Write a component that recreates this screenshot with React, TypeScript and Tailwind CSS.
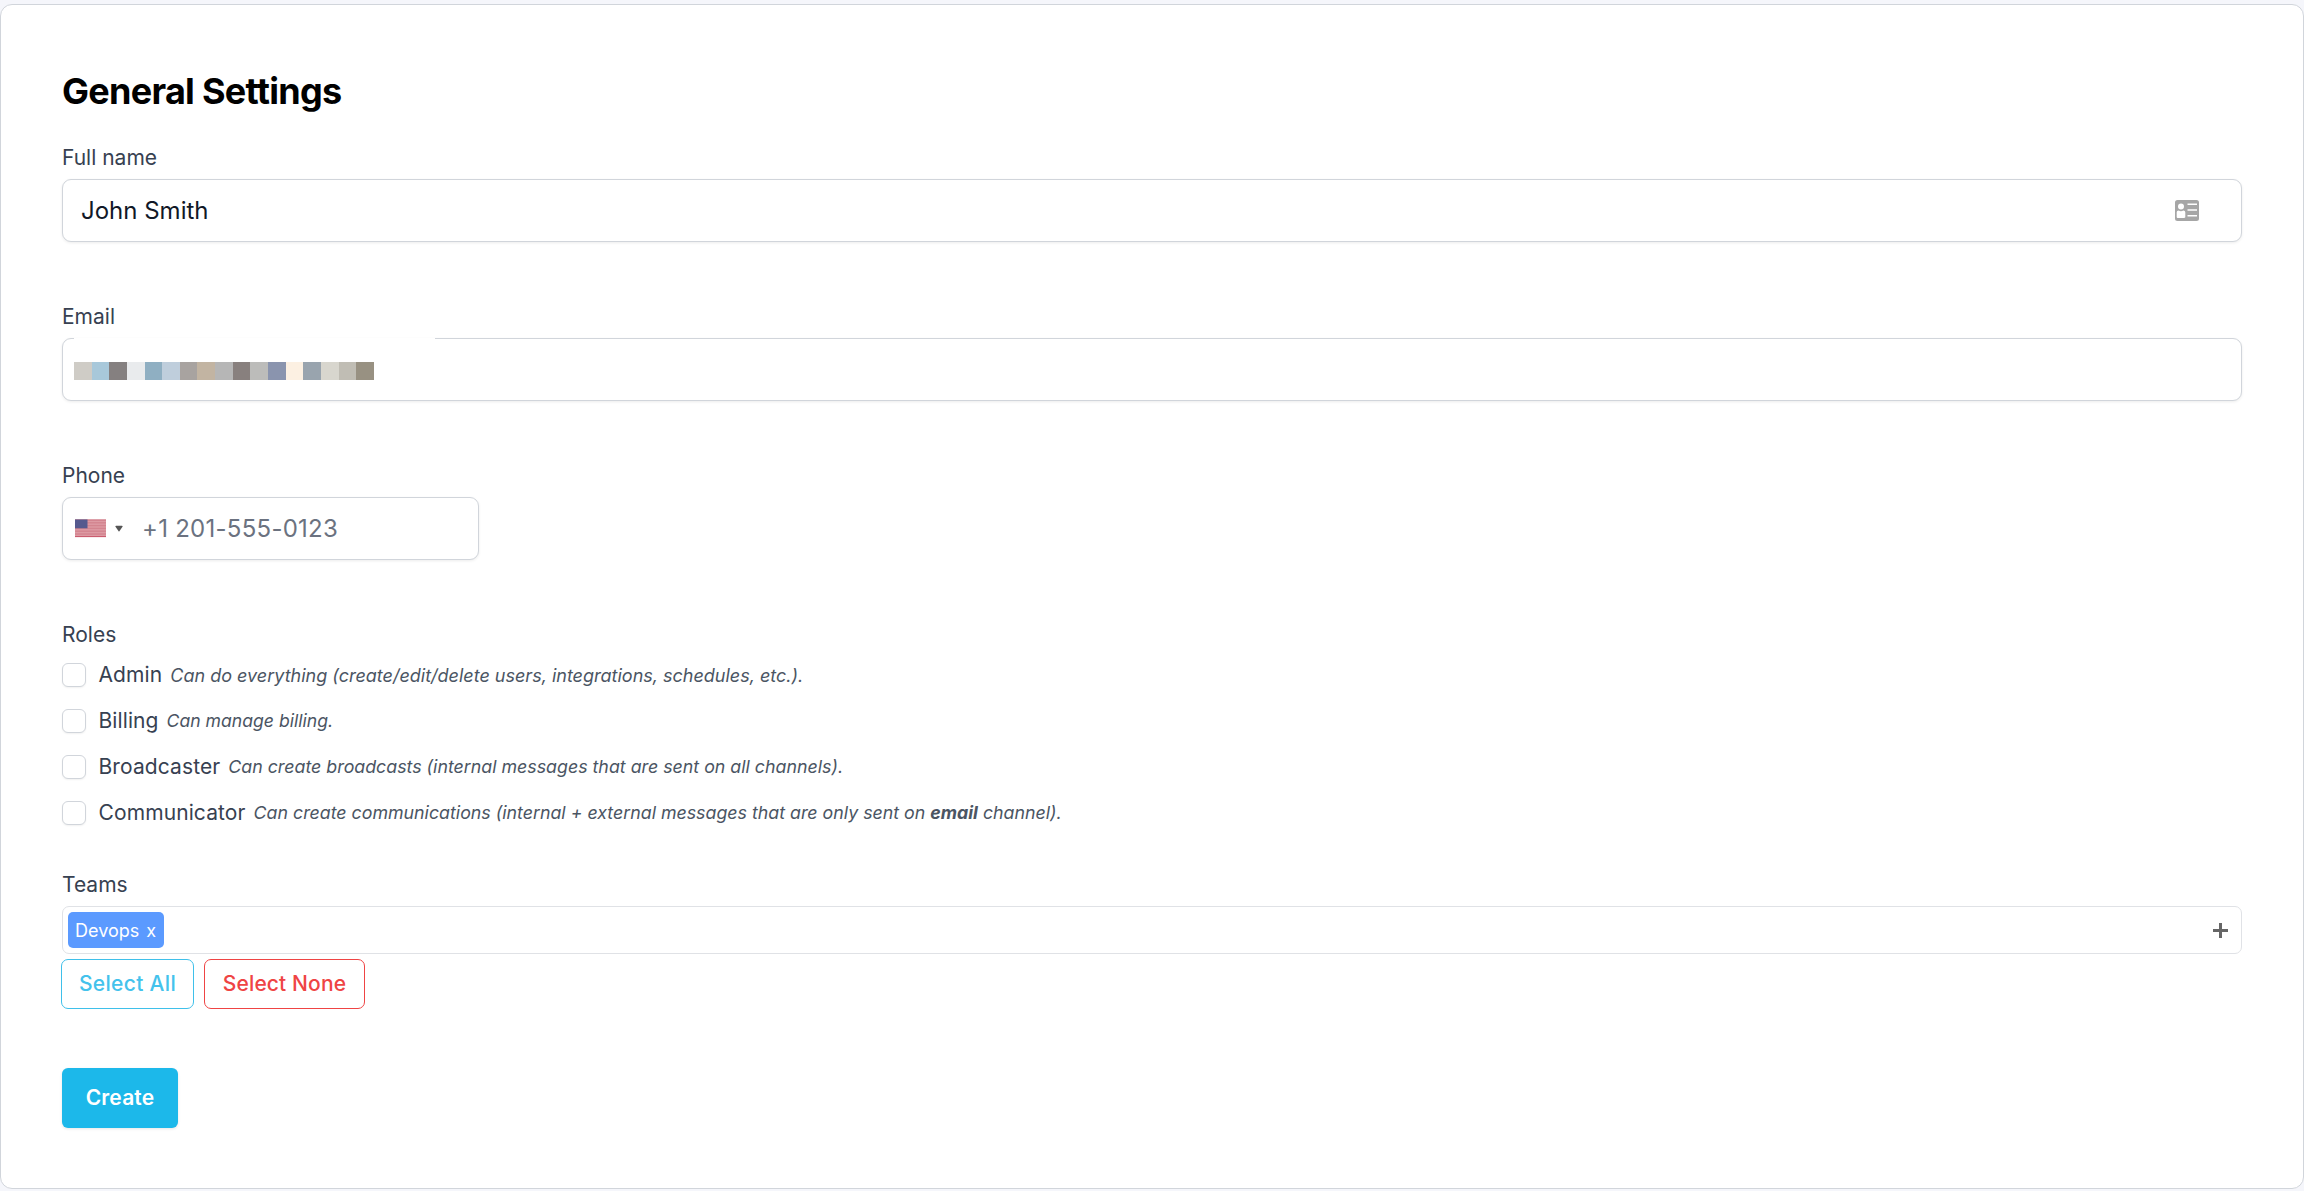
import React from "react";

const maskColors = ["#cfccc6","#a8c8da","#858080","#e9ebed","#8fafc2","#bfcedc","#a8a3a0","#c2b4a2","#b6b6b6","#88807e","#bcbcba","#8a94ae","#fcf0e2","#99a4ae","#d8d6ce","#c0bdb4","#989182"];

function Label({ children, className = "" }: { children: React.ReactNode; className?: string }) {
  return <label className={`block h-[32px] text-[21px] font-normal text-[#374151] ${className}`}>{children}</label>;
}

const inputBox = "flex h-[63px] items-center rounded-[9px] border border-[#d1d5db] bg-white shadow-[0_1px_3px_rgba(0,0,0,0.08)]";

function Role({ name, descClass, children }: { name: string; descClass: string; children: React.ReactNode }) {
  return (
    <div className="flex h-[24px] items-center">
      <span className="h-[24px] w-[24px] shrink-0 rounded-[6px] border border-[#d1d5db] bg-white shadow-[0_1px_2px_rgba(0,0,0,0.06)]" />
      <span className="ml-[12.5px] text-[21px] tracking-[0.005em] text-[#374151]">{name}</span>
      <span className={`ml-[8px] italic text-[#4b5563] ${descClass}`}>{children}</span>
    </div>
  );
}

export default function App() {
  return (
    <div className="min-h-[1191px] bg-[#f5f6fb] pt-[4px] pb-[2px] font-['Inter',sans-serif]">
      <div className="h-[1185px] rounded-[12px] border border-[#d1d5db] bg-white px-[61px] pt-[59px]">
        <h1 className="h-[54px] text-[36px] leading-[55px] font-bold tracking-[-0.02em] text-black">General Settings</h1>
        <Label className="mt-[23px] mb-[6px] leading-[34px]">Full name</Label>
        <div className={`${inputBox} w-full pl-[18px] pr-[42px]`}>
          <span className="flex-1 text-[24px] text-[#111827]">John Smith</span>
          <svg width="24" height="21" viewBox="0 0 24 21" className="shrink-0">
            <path
              fillRule="evenodd"
              fill="#a6a6a6"
              d="M2.5 0h19A2.5 2.5 0 0 1 24 2.5v16a2.5 2.5 0 0 1-2.5 2.5h-19A2.5 2.5 0 0 1 0 18.5v-16A2.5 2.5 0 0 1 2.5 0zM6 3.6a3 3 0 1 0 0 6 3 3 0 0 0 0-6zM3.6 10.6c-1.1 0-1.9.8-1.9 1.9v4.6c0 .5.4.9.9.9h6.8c.5 0 .9-.4.9-.9v-4.6c0-1.1-.8-1.9-1.9-1.9-.8.4-1.6.6-2.4.6s-1.6-.2-2.4-.6zM12.5 3.5v1.5h9.5V3.5zM12.5 9.3v1.5h9.5V9.3zM12.5 15v1.5h9.5V15z"
            />
          </svg>
        </div>

        <Label className="mt-[58px] mb-[6px] leading-[34px]">Email</Label>
        <div className={`${inputBox} relative w-full pl-[11px]`}>
          <div className="flex h-[18px] translate-y-[1px]">
            {maskColors.map((c) => (
              <span key={c} className="h-full w-[17.65px]" style={{ backgroundColor: c }} />
            ))}
          </div>
          <span className="absolute top-[-1px] left-[11px] h-[2px] w-[361px] bg-white" />
        </div>

        <Label className="mt-[58px] mb-[6px] leading-[34px]">Phone</Label>
        <div className={`${inputBox} w-[417px] pl-[12px]`}>
          <svg width="31" height="18" viewBox="0 0 31 18" className="shrink-0 translate-y-[-0.7px]">
            <rect width="31" height="18" fill="#dd9aa3" />
            <rect y="0" width="31" height="1.4" fill="#cf7b88" />
            <rect y="2.8" width="31" height="1.4" fill="#d3848f" />
            <rect y="5.6" width="31" height="1.4" fill="#d3848f" />
            <rect y="8.4" width="31" height="1.4" fill="#d3848f" />
            <rect y="11.2" width="31" height="1.4" fill="#d3848f" />
            <rect y="14" width="31" height="1.4" fill="#d3848f" />
            <rect y="16.8" width="31" height="1.2" fill="#c8566a" />
            <rect width="12.5" height="9" fill="#55598e" />
          </svg>
          <svg width="8" height="7" viewBox="0 0 8 7" className="ml-[9px] shrink-0">
            <path d="M1 .8h6a.6.6 0 0 1 .5.9L4.4 6.2a.5.5 0 0 1-.8 0L.5 1.7A.6.6 0 0 1 1 .8z" fill="#555" />
          </svg>
          <span className="ml-[19px] text-[24px] tracking-[0.011em] text-[#6b7280]">+1 201-555-0123</span>
        </div>

        <Label className="mt-[59px] mb-[12px] leading-[32px]">Roles</Label>
        <div className="flex flex-col gap-[22px]">
          <Role name="Admin" descClass="text-[18px]">Can do everything (create/edit/delete users, integrations, schedules, etc.).</Role>
          <Role name="Billing" descClass="text-[17.6px]">Can manage billing.</Role>
          <Role name="Broadcaster" descClass="text-[17.8px]">Can create broadcasts (internal messages that are sent on all channels).</Role>
          <Role name="Communicator" descClass="text-[17.8px]">
            Can create communications (internal + external messages that are only sent on <b className="font-bold">email</b> channel).
          </Role>
        </div>

        <Label className="mt-[44px] mb-[5px] leading-[32px]">Teams</Label>
        <div className="flex h-[48px] items-center justify-between rounded-[7px] border border-[#e0e2e6] bg-white pl-[5px] pr-[13px]">
          <span className="flex h-[36px] w-[96px] items-center rounded-[5px] bg-[#5b9aff] pl-[7px] text-[18px] text-white">
            Devops<span className="ml-[7px]">x</span>
          </span>
          <svg width="15" height="15" viewBox="0 0 15 15">
            <path d="M7.5 0v15M0 7.5h15" stroke="#666" strokeWidth="3" />
          </svg>
        </div>
        <div className="mt-[5px] ml-[-1px] flex gap-[10px]">
          <button className="h-[50px] w-[133px] rounded-[7px] border border-[#3fc0ea] bg-white text-[21px] font-medium tracking-[0.015em] text-[#44c2ec]">Select All</button>
          <button className="h-[50px] w-[161px] rounded-[7px] border border-[#ef4444] bg-white text-[21px] font-medium tracking-[0.006em] text-[#ef4444]">Select None</button>
        </div>
        <button className="mt-[59px] h-[60px] w-[116px] rounded-[6px] bg-[#1cb8ea] text-[21px] font-semibold tracking-[0.007em] text-white shadow-[0_1px_3px_rgba(0,0,0,0.1)]">Create</button>
      </div>
    </div>
  );
}
